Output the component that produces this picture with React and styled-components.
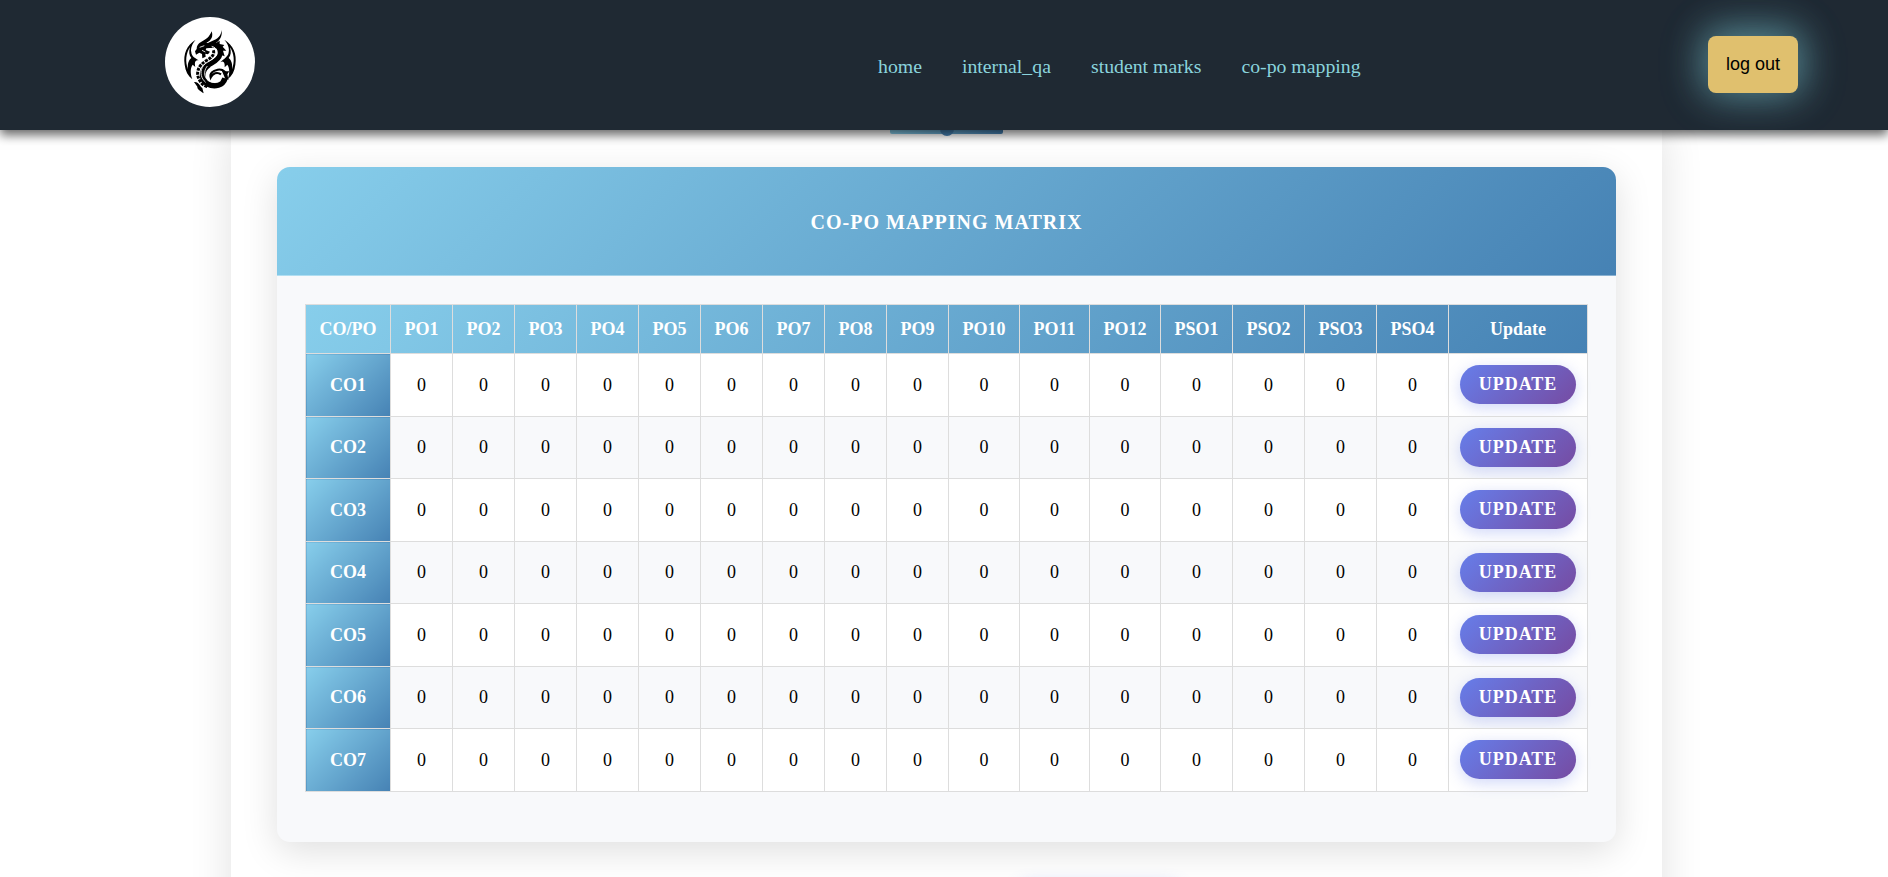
import React from "react";
import styled, { createGlobalStyle } from "styled-components";

const Global = createGlobalStyle`
  * { box-sizing: border-box; }
  html, body { margin: 0; height: 877px; overflow: hidden; background: #fff; }
  body { font-family: "Liberation Serif", "Times New Roman", serif; color: #000; }
`;

const Page = styled.div`
  height: 877px;
  overflow: hidden;
  display: flex;
  flex-direction: column;
`;

const Navbar = styled.header`
  position: relative;
  z-index: 2;
  flex: none;
  height: 130px;
  padding: 0 90px 0 165px;
  display: grid;
  grid-template-columns: 710px 1fr auto;
  background: #1f2933;
  box-shadow: 0 5px 10px rgba(0, 0, 0, 0.6);
`;

const Logo = styled.div`
  width: 90px;
  height: 90px;
  margin-top: 17px;
  border-radius: 50%;
  background: #fff;
  overflow: hidden;
  svg { display: block; }
`;

const NavLinks = styled.nav`
  display: flex;
  gap: 40px;
  padding: 55px 0 0 3px;
`;

const NavLink = styled.a`
  font-size: 19.8px;
  line-height: 22px;
  color: #8ad4dd;
  white-space: nowrap;
`;

const LogoutButton = styled.button`
  width: 90px;
  height: 57px;
  margin-top: 36px;
  padding: 0;
  border: 0;
  border-radius: 8px;
  background: #e0c06e;
  color: #000;
  font: 18px "Liberation Sans", Arial, sans-serif;
  box-shadow: 0 0 50px rgba(127, 205, 215, 0.3), 0 -3px 36px 4px rgba(127, 205, 215, 0.45);
`;

const Container = styled.main`
  flex: none;
  width: 1431px;
  height: 800px;
  margin-left: 231px;
  padding: 0 46px;
  display: flex;
  flex-direction: column;
  background: #fff;
  box-shadow: 0 0 40px rgba(0, 0, 0, 0.12);
`;

const Underline = styled.div`
  align-self: center;
  width: 113px;
  height: 4px;
  margin-bottom: 33px;
  display: flex;
  justify-content: center;
  border-radius: 0 0 2px 2px;
  background: linear-gradient(90deg, #87ceeb, #4682b4);
`;

const Dot = styled.span`
  width: 14px;
  height: 14px;
  margin-top: -8px;
  border-radius: 50%;
  background: #4682b4;
`;

const Card = styled.section`
  flex: none;
  height: 675px;
  border-radius: 13px;
  overflow: hidden;
  background: #f8f9fb;
  box-shadow: 0 9px 36px rgba(0, 0, 0, 0.13);
`;

const CardHeader = styled.div`
  height: 109px;
  padding-top: 1px;
  display: flex;
  align-items: center;
  justify-content: center;
  background: linear-gradient(135deg, #87ceeb 0%, #4682b4 100%);
  border-bottom: 1px solid rgba(255, 255, 255, 0.35);
`;

const CardTitle = styled.h2`
  margin: 0;
  font-size: 20px;
  line-height: 22px;
  letter-spacing: 1px;
  color: #fff;
`;

const Matrix = styled.table`
  width: 1283px;
  margin: 28px 0 0 28px;
  table-layout: fixed;
  border-collapse: collapse;
  font-size: 18px;
  line-height: 20px;
`;

const Col = styled.col`
  width: ${(p) => p.$width}px;
`;

const HeadRow = styled.tr`
  height: 49px;
  background: linear-gradient(135deg, #87ceeb 0%, #4682b4 100%);
`;

const HeadCell = styled.th`
  padding: 0;
  border: 1px solid #ddd;
  color: #fff;
`;

const RowLabel = styled.th`
  padding: 0;
  border: 1px solid #ddd;
  color: #fff;
  background: linear-gradient(135deg, #87ceeb 0%, #4682b4 100%);
`;

const Cell = styled.td`
  padding: 0;
  border: 1px solid #ddd;
  text-align: center;
`;

const ActionCell = styled(Cell)``;

const BodyRow = styled.tr`
  height: ${(p) => p.$height}px;
  background: ${(p) => (p.$striped ? "#f8f9fb" : "#fff")};
  ${RowLabel}, ${Cell} { padding-bottom: ${(p) => (p.$striped ? 1 : 0)}px; }
  ${ActionCell} { padding-bottom: ${(p) => (p.$striped ? 0 : 2)}px; }
`;

const UpdateButton = styled.button`
  display: block;
  width: 116px;
  height: 39px;
  margin: 0 auto;
  padding: 0;
  border: 0;
  border-radius: 20px;
  background: linear-gradient(135deg, #667eea 0%, #764ba2 100%);
  box-shadow: 0 4px 15px rgba(102, 126, 234, 0.3);
  color: #fff;
  font: bold 18px "Liberation Serif", "Times New Roman", serif;
  letter-spacing: 1px;
`;

const SubmitButton = styled(UpdateButton)`
  flex: none;
  width: 174px;
  margin: 37px 0 0 735px;
`;

const columns = [
  ...Array.from({ length: 12 }, (_, i) => `PO${i + 1}`),
  ...Array.from({ length: 4 }, (_, i) => `PSO${i + 1}`),
];
const widths = [85, 62, 62, 62, 62, 62, 62, 62, 62, 62, 71, 70, 71, 72, 72, 72, 72, 139];
const rowHeights = [63, 62, 63, 62, 63, 62, 63];

const Dragon = () => (
  <svg width="90" height="90" viewBox="0 0 270 270">
    <g fill="#000">
      <path d="M92 68C65 84 54 111 59 143C61 162 69 177 82 187C75 168 76 153 83 143L91 150C88 136 90 129 101 130C89 123 80 118 79 106C76 93 82 80 92 68ZM75 91C71 104 72 116 79 123C70 130 67 143 69 157C60 133 63 109 75 91Z" />
      <path d="M178 68C205 84 216 111 211 143C209 162 201 177 188 187C195 168 194 153 187 143L179 151C180 137 176 130 166 136C179 124 190 118 191 106C194 93 188 80 178 68ZM195 91C199 104 198 116 191 123C200 130 203 143 201 157C210 133 207 109 195 91Z" />
      <path d="M140 43C133 61 122 68 108 75C99 80 95 87 95 96L90 103L93 113L103 107L111 111L112 124L122 119L121 110L129 112L135 104L122 99L124 94L142 92L138 80L124 78C140 70 145 58 140 43Z" />
      <path d="M170 39C168 58 157 66 143 71L124 80L146 82C162 74 173 60 170 39Z" />
      <path d="M152 79L164 71L164 81L178 84L173 89L184 101L174 101L179 118L169 114L162 129Z" />
      <path d="M168 155L180 163L193 163L186 173L191 188L180 184Z" />
      <path d="M87 195C102 193 103 207 112 213L116 229C105 221 96 216 97 209Z" />
    </g>
    <g fill="none" stroke="#000">
      <path d="M128 86C154 79 170 92 165 112C161 130 143 135 129 145" strokeWidth="15" />
      <path d="M132 143C107 159 108 190 128 201C149 212 174 205 180 184" strokeWidth="17" />
      <path d="M145 100C150 113 139 122 126 130C99 145 91 168 104 190C109 200 118 207 128 209" strokeWidth="9" strokeDasharray="9 3" />
      <path d="M184 188C188 166 174 155 158 158C143 161 133 170 137 182C143 169 156 163 168 172" strokeWidth="6" />
    </g>
    <g fill="none" stroke="#fff" strokeWidth="2.5">
      <path d="M140 88C157 92 161 106 152 118C143 130 122 133 112 151C104 168 109 185 122 196" />
      <path d="M127 147C113 164 118 187 136 194C149 199 160 197 168 190" />
      <path d="M104 91L118 86M111 100L121 105" />
    </g>
  </svg>
);

export default function App() {
  return (
    <Page>
      <Global />
      <Navbar>
        <Logo><Dragon /></Logo>
        <NavLinks>
          {["home", "internal_qa", "student marks", "co-po mapping"].map((t) => (
            <NavLink key={t}>{t}</NavLink>
          ))}
        </NavLinks>
        <LogoutButton>log out</LogoutButton>
      </Navbar>
      <Container>
        <Underline><Dot /></Underline>
        <Card>
          <CardHeader><CardTitle>CO-PO MAPPING MATRIX</CardTitle></CardHeader>
          <Matrix>
            <colgroup>
              {widths.map((w, i) => <Col key={i} $width={w} />)}
            </colgroup>
            <thead>
              <HeadRow>
                {["CO/PO", ...columns, "Update"].map((c) => <HeadCell key={c}>{c}</HeadCell>)}
              </HeadRow>
            </thead>
            <tbody>
              {rowHeights.map((h, i) => (
                <BodyRow key={i} $height={h} $striped={i % 2 === 1}>
                  <RowLabel>{`CO${i + 1}`}</RowLabel>
                  {columns.map((c) => <Cell key={c}>0</Cell>)}
                  <ActionCell><UpdateButton>UPDATE</UpdateButton></ActionCell>
                </BodyRow>
              ))}
            </tbody>
          </Matrix>
        </Card>
        <SubmitButton aria-label="Save" />
      </Container>
    </Page>
  );
}
